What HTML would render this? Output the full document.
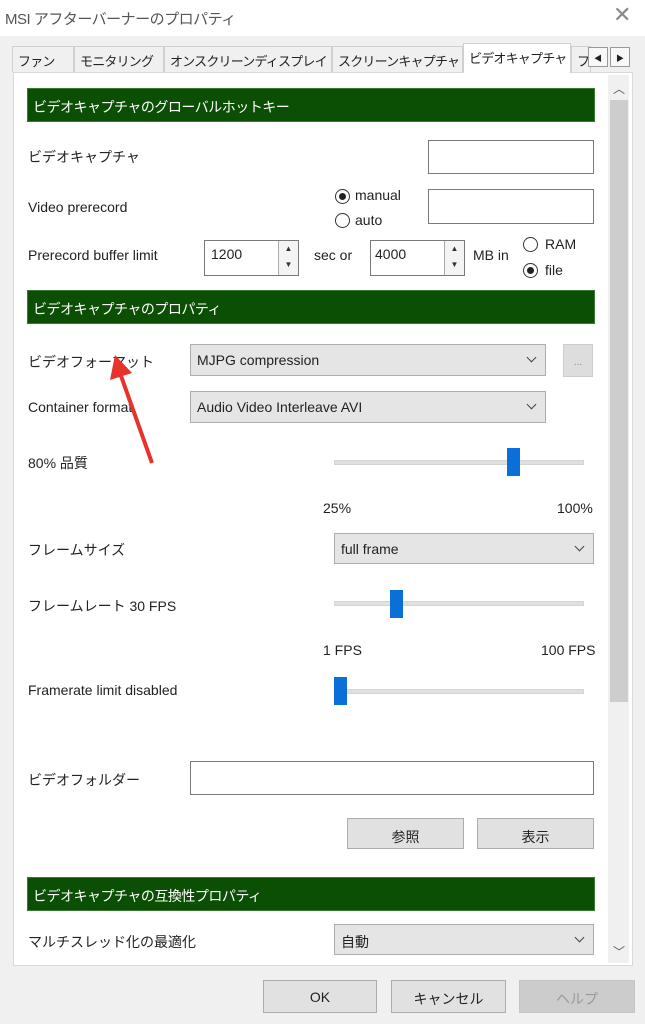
<!DOCTYPE html>
<html><head><meta charset="utf-8"><style>
*{box-sizing:border-box;margin:0;padding:0}
body{width:645px;height:1024px;background:#f0f0f0;position:relative;overflow:hidden;font-family:"Liberation Sans","Noto Sans CJK JP",sans-serif;font-size:14px;color:#222}
.a{position:absolute}
.title{left:0;top:0;width:645px;height:36px;background:#fff}
.tab{top:46px;height:26px;border:1px solid #d0d0d0;border-bottom:none;background:#f0f0f0;font-size:13px;letter-spacing:-0.8px;padding:4px 0 0 5px;white-space:nowrap;overflow:hidden}
.panel{left:13px;top:72px;width:620px;height:894px;background:#fff;border:1px solid #d9d9d9}
.green{left:27px;width:568px;height:34px;background:#0b4f05;color:#fff;font-size:14px;letter-spacing:-0.5px;padding:8px 0 0 5px;border:1px solid #3a7a30}
.inp{background:#fff;border:1px solid #7a7a7a}
.sel{background:#e5e5e5;border:1px solid #adadad;padding:7px 0 0 6px;font-size:14px}
.sel:after{content:"";position:absolute;right:10px;top:9px;width:6px;height:6px;border-right:1px solid #444;border-bottom:1px solid #444;transform:rotate(45deg)}
.lbl{font-size:14px;white-space:nowrap}
.track{height:5px;background:#e0e0e0;border:1px solid #d4d4d4}
.thumb{width:13px;height:28px;background:#0a6fd6}
.btn{background:#e1e1e1;border:1px solid #adadad;text-align:center;font-size:14px;padding-top:8px}
.radio{width:15px;height:15px;border:1px solid #333;border-radius:50%;background:#fff}
.radio.on:after{content:"";position:absolute;left:3px;top:3px;width:7px;height:7px;border-radius:50%;background:#222}
.spin{width:20px;border-left:1px solid #aaa;background:#f4f4f4;font-size:8px;text-align:center;line-height:16px;color:#333}
</style></head><body>
<div class="a title"></div>
<div class="a lbl" style="left:5px;top:8px;font-size:15px;color:#555;letter-spacing:-0.5px">MSI アフターバーナーのプロパティ</div>
<div class="a" style="left:613px;top:2px;font-size:22px;color:#888">✕</div>

<div class="a tab" style="left:12px;width:62px">ファン</div>
<div class="a tab" style="left:74px;width:90px">モニタリング</div>
<div class="a tab" style="left:164px;width:168px">オンスクリーンディスプレイ</div>
<div class="a tab" style="left:332px;width:131px">スクリーンキャプチャ</div>
<div class="a tab" style="left:463px;top:43px;height:30px;width:108px;background:#fff;z-index:2">ビデオキャプチャ</div>
<div class="a tab" style="left:571px;width:20px">フ</div>
<div class="a" style="left:588px;top:47px;width:20px;height:20px;border:1px solid #999;background:#f8f8f8;font-size:8px;text-align:center;padding-top:5px">◀</div>
<div class="a" style="left:610px;top:47px;width:20px;height:20px;border:1px solid #999;background:#f8f8f8;font-size:8px;text-align:center;padding-top:5px">▶</div>

<div class="a panel"></div>
<div class="a" style="left:608px;top:75px;width:21px;height:888px;background:#f0f0f0"></div>
<div class="a" style="left:610px;top:100px;width:18px;height:602px;background:#cdcdcd"></div>
<div class="a" style="left:613px;top:80px;font-size:12px;color:#555">︿</div>
<div class="a" style="left:613px;top:943px;font-size:12px;color:#555">﹀</div>

<div class="a green" style="top:88px">ビデオキャプチャのグローバルホットキー</div>
<div class="a lbl" style="left:28px;top:147px">ビデオキャプチャ</div>
<div class="a inp" style="left:428px;top:140px;width:166px;height:34px"></div>
<div class="a lbl" style="left:28px;top:199px">Video prerecord</div>
<div class="a radio on" style="left:335px;top:189px"></div><div class="a lbl" style="left:355px;top:187px">manual</div>
<div class="a radio" style="left:335px;top:213px"></div><div class="a lbl" style="left:355px;top:212px">auto</div>
<div class="a inp" style="left:428px;top:189px;width:166px;height:35px"></div>
<div class="a lbl" style="left:28px;top:247px">Prerecord buffer limit</div>
<div class="a inp" style="left:204px;top:240px;width:95px;height:36px;padding:5px 0 0 6px">1200<div class="a spin" style="right:0;top:0;height:34px">▲<br>▼</div></div>
<div class="a lbl" style="left:314px;top:247px">sec or</div>
<div class="a inp" style="left:370px;top:240px;width:95px;height:36px;padding:5px 0 0 4px">4000<div class="a spin" style="right:0;top:0;height:34px">▲<br>▼</div></div>
<div class="a lbl" style="left:473px;top:247px">MB in</div>
<div class="a radio" style="left:523px;top:237px"></div><div class="a lbl" style="left:545px;top:236px">RAM</div>
<div class="a radio on" style="left:523px;top:263px"></div><div class="a lbl" style="left:545px;top:262px">file</div>

<div class="a green" style="top:290px">ビデオキャプチャのプロパティ</div>
<div class="a lbl" style="left:28px;top:352px">ビデオフォーマット</div>
<div class="a sel" style="left:190px;top:344px;width:356px;height:32px">MJPG compression</div>
<div class="a" style="left:563px;top:344px;width:30px;height:33px;background:#ddd;border:1px solid #ccc;font-size:10px;color:#888;text-align:center;padding-top:12px">...</div>
<div class="a lbl" style="left:28px;top:399px">Container format</div>
<div class="a sel" style="left:190px;top:391px;width:356px;height:32px">Audio Video Interleave AVI</div>
<svg class="a" style="left:105px;top:345px" width="55" height="125"><line x1="47" y1="118" x2="15" y2="28" stroke="#e8322c" stroke-width="4"/><polygon points="10,10 5,35 27,28" fill="#e8322c"/></svg>

<div class="a lbl" style="left:28px;top:453px">80% 品質</div>
<div class="a track" style="left:334px;top:460px;width:250px"></div>
<div class="a thumb" style="left:507px;top:448px"></div>
<div class="a lbl" style="left:323px;top:500px">25%</div>
<div class="a lbl" style="left:557px;top:500px">100%</div>
<div class="a lbl" style="left:28px;top:540px">フレームサイズ</div>
<div class="a sel" style="left:334px;top:533px;width:260px;height:31px">full frame</div>
<div class="a lbl" style="left:28px;top:596px">フレームレート 30 FPS</div>
<div class="a track" style="left:334px;top:601px;width:250px"></div>
<div class="a thumb" style="left:390px;top:590px"></div>
<div class="a lbl" style="left:323px;top:642px">1 FPS</div>
<div class="a lbl" style="left:541px;top:642px">100 FPS</div>
<div class="a lbl" style="left:28px;top:682px">Framerate limit disabled</div>
<div class="a track" style="left:334px;top:689px;width:250px"></div>
<div class="a thumb" style="left:334px;top:677px"></div>

<div class="a lbl" style="left:28px;top:770px">ビデオフォルダー</div>
<div class="a inp" style="left:190px;top:761px;width:404px;height:34px"></div>
<div class="a btn" style="left:347px;top:818px;width:117px;height:31px">参照</div>
<div class="a btn" style="left:477px;top:818px;width:117px;height:31px">表示</div>

<div class="a green" style="top:877px">ビデオキャプチャの互換性プロパティ</div>
<div class="a lbl" style="left:28px;top:932px">マルチスレッド化の最適化</div>
<div class="a sel" style="left:334px;top:924px;width:260px;height:31px">自動</div>

<div class="a btn" style="left:263px;top:980px;width:114px;height:33px">OK</div>
<div class="a btn" style="left:391px;top:980px;width:115px;height:33px">キャンセル</div>
<div class="a btn" style="left:519px;top:980px;width:116px;height:33px;color:#999;background:#ccc;border-color:#c4c4c4">ヘルプ</div>
</body></html>
